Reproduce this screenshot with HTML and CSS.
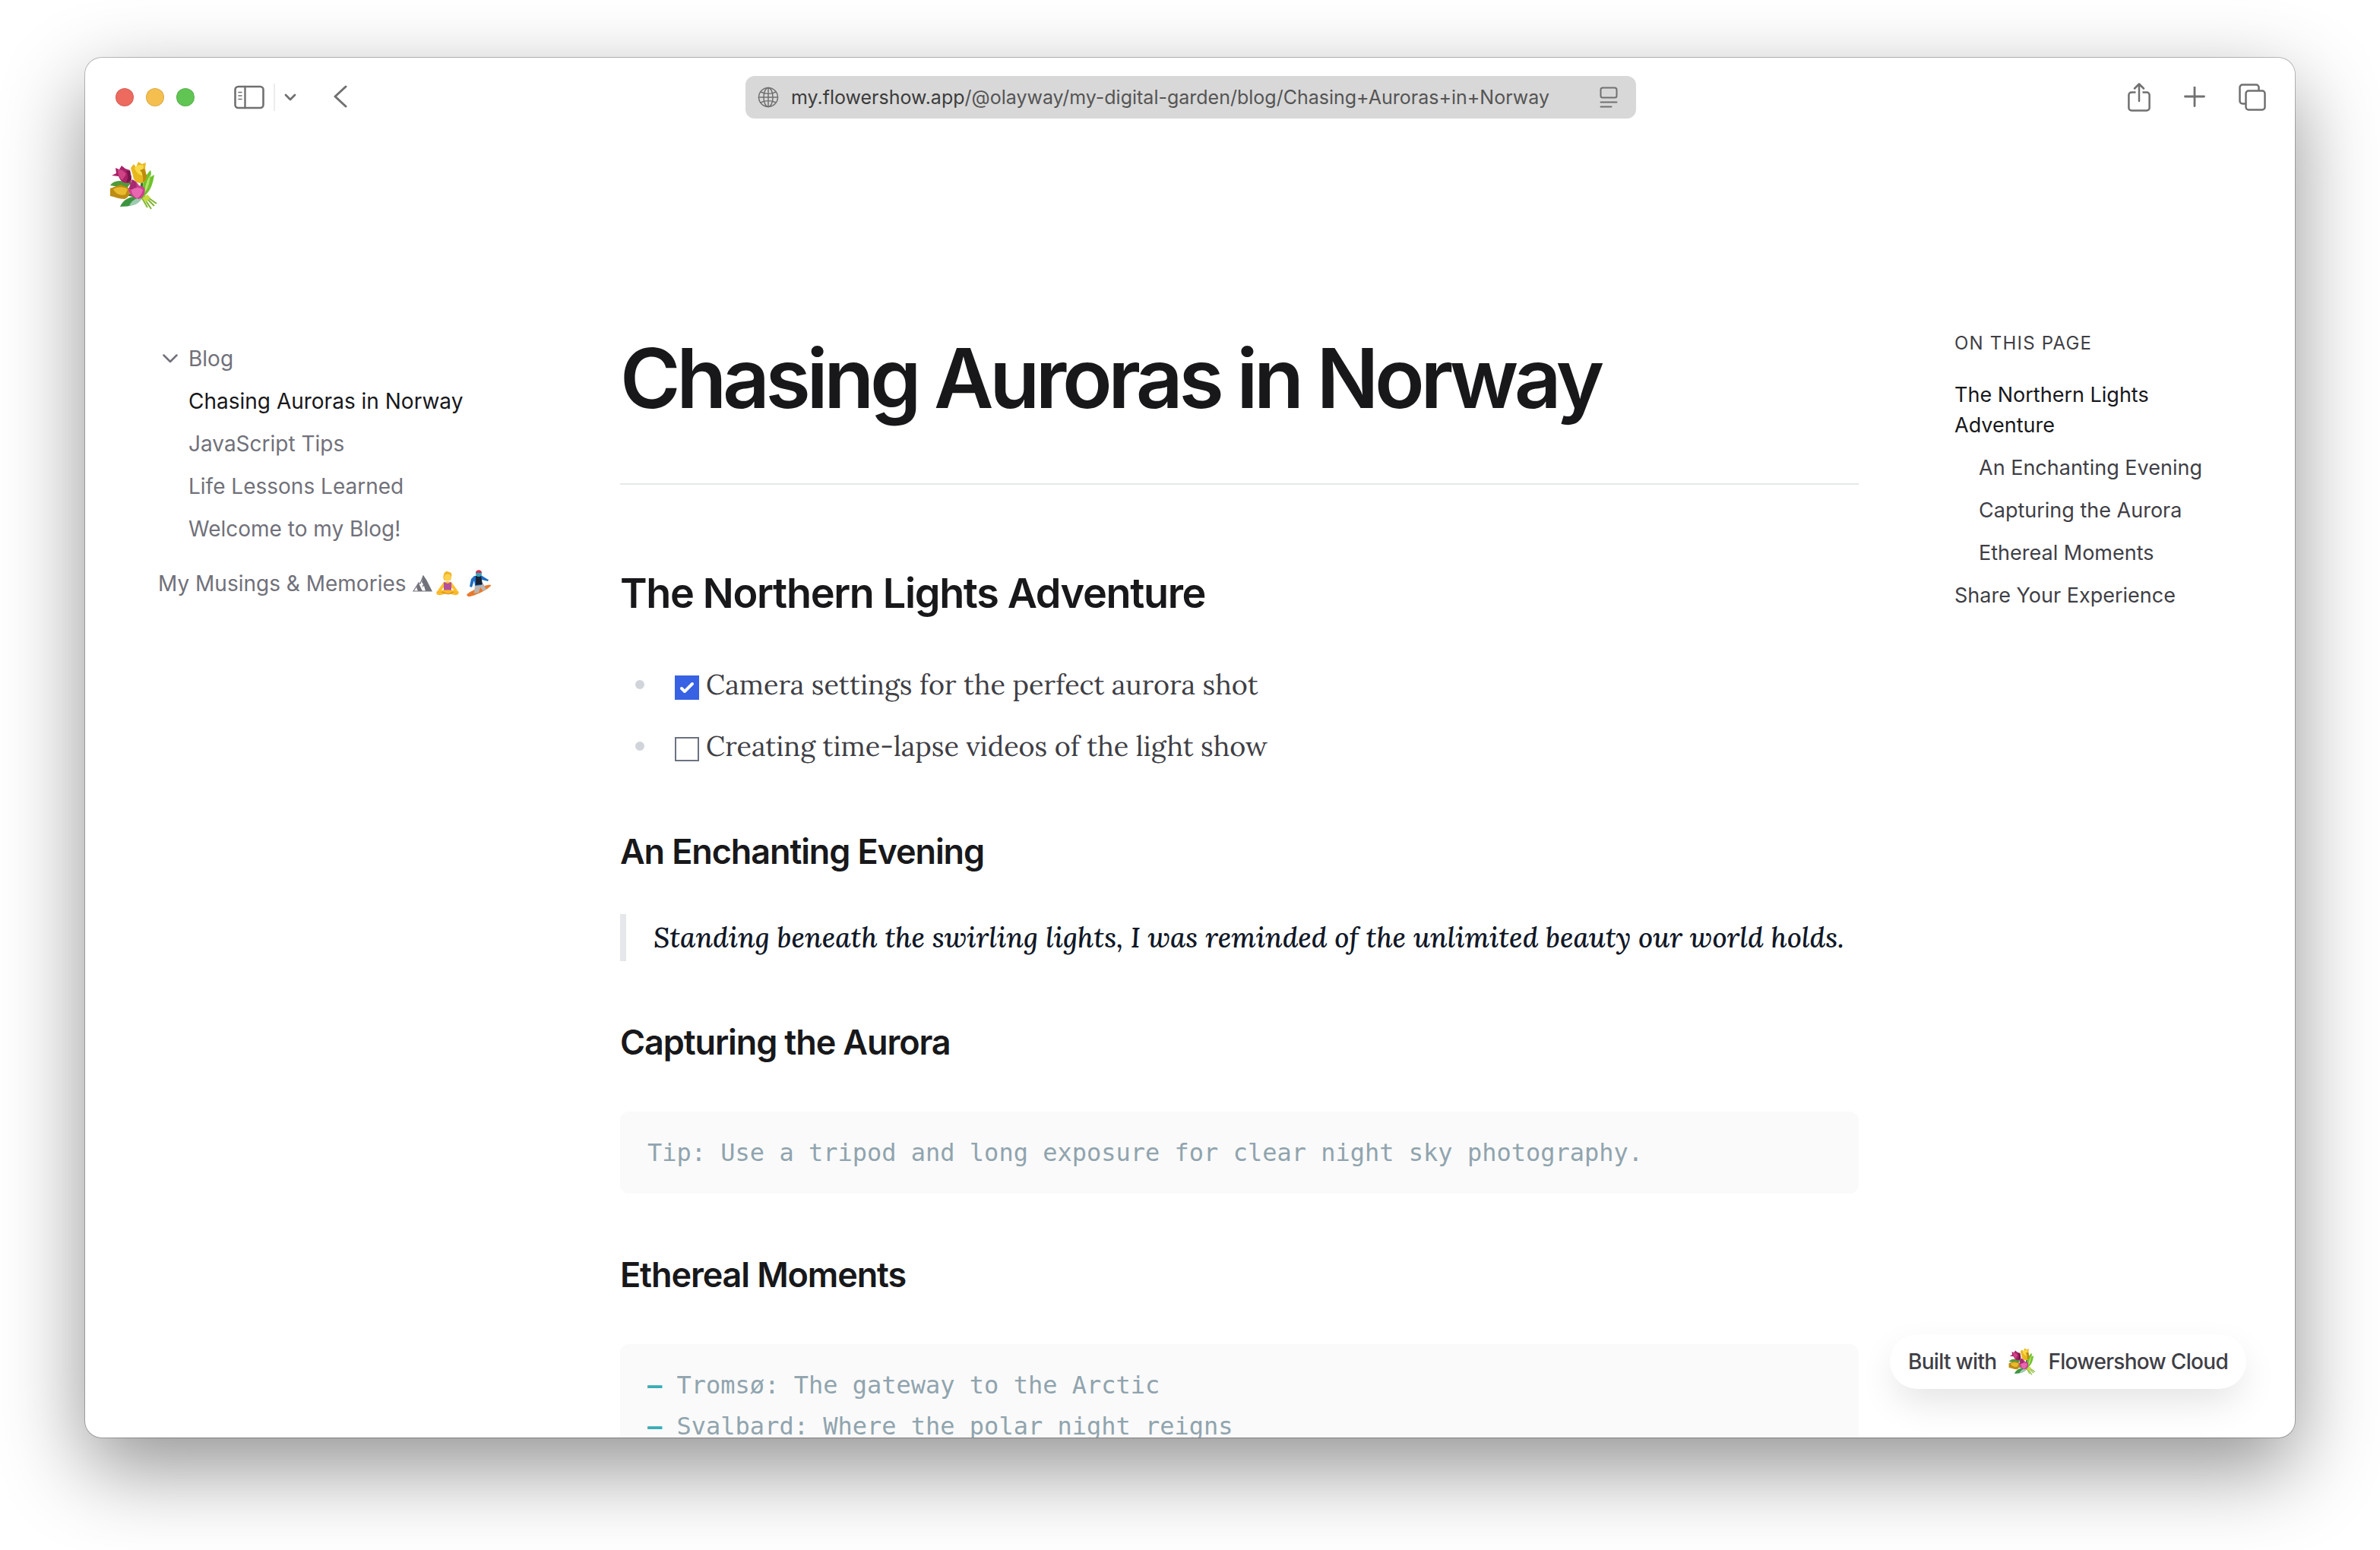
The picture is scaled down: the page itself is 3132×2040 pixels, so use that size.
FILE: index.html
```html
<!DOCTYPE html>
<html lang="en">
<head>
<meta charset="utf-8">
<meta name="viewport" content="width=device-width, initial-scale=1">
<title>Chasing Auroras in Norway</title>
<link rel="stylesheet" href="styles.css">
</head>
<body>
<svg class="defs" aria-hidden="true">
  <symbol id="bouquet" viewBox="0 0 64 64">
    <path d="M14 60c4-9 12-14 26-14l4 2c-6 9-16 12-30 12z" fill="#3d9440"/>
    <path d="M26 59c3-7 9-11 17-11-3 7-8 10-17 11z" fill="#9dcbb0"/>
    <path d="M44 46c-2-14 2-26 10-34 2 4 0 7 0 9l5-3c-2 12-4 20-13 28z" fill="#6fc22c"/>
    <path d="M46 42c1-9 3-17 8-24-1 10-3 18-8 24z" fill="#b4e36a"/>
    <path d="M1 32c5-7 15-8 26-2l-4 6z" fill="#4f9a3a"/>
    <path d="M43 25l-1 14M26 27l6 10M24 44l20 4" stroke="#37762c" stroke-width="3" fill="none"/>
    <path d="M44 46l11 17M46 46l13 13M48 46l14 10M42 47l8 14" stroke="#7fb52c" stroke-width="2" fill="none"/>
    <path d="M43 49l7-5 4 4-6 6z" fill="#c9dc3e"/>
    <path d="M28 9l4-5 3 4 3-7 5 3 5-2-1 7 2 12c-1 5-4 8-8 8-6 0-10-5-10-10z" fill="#e8b71d"/>
    <path d="M33 9c3-4 8-5 12-3l-2 13c-4-1-8-4-10-10z" fill="#f8d94a"/>
    <path d="M40 12c3 2 5 8 4 16 4-2 5-6 5-9l-3-9z" fill="#bd8a0e"/>
    <path d="M3 19l6-3-1-7 5 2 3-5 5 4 6 2 2 11c0 4-2 6-6 6-6 0-9-4-11-9z" fill="#a82267"/>
    <path d="M11 11c5 0 8 2 11 6l-5 8c-4-3-6-8-6-14z" fill="#cf4386"/>
    <path d="M22 13c3 5 3 10 0 15 5 0 7-3 7-7l-2-8z" fill="#78164c"/>
    <path d="M1 36l8-3 6-2 12 5c1 7-2 12-7 14-7 0-13-3-19-4z" fill="#bd8c12"/>
    <path d="M5 37c7-4 14-3 19 0l-3 7c-6 2-12 0-16-7z" fill="#e9ba2e"/>
    <path d="M25 38l4-13 6 2 4 5 7 3c2 7-1 12-7 15-7-1-12-5-14-12z" fill="#cf3e90"/>
    <path d="M26 37l4-13c5 2 7 7 5 13z" fill="#a52a70"/>
    <path d="M29 38c5-4 11-4 15 0-1 5-4 9-8 11-4-3-7-6-7-11z" fill="#e868b0"/>
  </symbol>
</svg>

<div class="window">
  <header class="toolbar">
    <div class="tools">
      <span class="lights"><i class="light red"></i><i class="light amber"></i><i class="light green"></i></span>
      <button class="tool sidebar-tool" aria-label="Show sidebar">
        <svg width="40" height="32" viewBox="0 0 40 32"><rect x="1.5" y="2" width="37" height="28" rx="4" stroke-width="2.6"/><path d="M14.500 2v28" stroke-width="2.400"/><path d="M6 9.500h4M6 14h4M6 18.500h4" stroke-width="1.600"/></svg>
      </button>
      <span class="divider"></span>
      <button class="tool menu-tool" aria-label="Tab groups">
        <svg width="16" height="12" viewBox="0 0 16 12"><path d="M2 3l6 6 6-6" stroke-width="2.800"/></svg>
      </button>
      <button class="tool" aria-label="Back">
        <svg width="20" height="32" viewBox="0 0 20 32"><path d="M17 2L3 15l14 13" stroke-width="3"/></svg>
      </button>
    </div>
    <button class="address" aria-label="Address">
      <svg class="globe" width="28" height="28" viewBox="0 0 28 28"><circle cx="14" cy="14" r="12.500"/><ellipse cx="14" cy="14" rx="6" ry="12.500"/><path d="M14 1.500v25M1.500 14h25M4 7c6 3 14 3 20 0M4 21c6-3 14-3 20 0"/></svg>
      <span class="url"><b>my.flowershow.app</b>/@olayway/my-digital-garden/blog/Chasing+Auroras+in+Norway</span>
      <svg class="reader" width="24" height="28" viewBox="0 0 24 28"><rect x="1.500" y="1.500" width="21" height="13" rx="2.500"/><path d="M1.500 20.500h21M1.500 26.500h14"/></svg>
    </button>
    <div class="tools tools-end">
      <button class="tool" aria-label="Share">
        <svg width="30" height="40" viewBox="0 0 30 40"><path d="M10.500 13.500H5a3.600 3.600 0 0 0-3.600 3.600v16.800A3.600 3.600 0 0 0 5 37.500h20a3.600 3.600 0 0 0 3.600-3.600V17.100A3.600 3.600 0 0 0 25 13.500h-5.500" stroke-linecap="butt"/><path d="M15 25V3M9 8.500l6-6 6 6"/></svg>
      </button>
      <button class="tool" aria-label="New tab">
        <svg width="28" height="28" viewBox="0 0 28 28"><path d="M14 .5v25M1.500 13h25" stroke-width="2.800"/></svg>
      </button>
      <button class="tool" aria-label="Tab overview">
        <svg width="36" height="36" viewBox="0 0 36 36"><path d="M9 26.500H5A3.500 3.500 0 0 1 1.500 23V5A3.500 3.500 0 0 1 5 1.500h18A3.500 3.500 0 0 1 26.500 5v4"/><rect x="9.500" y="9.500" width="25" height="25" rx="3.500"/></svg>
      </button>
    </div>
  </header>

  <div class="site-header">
    <a class="logo" href="#" aria-label="Home"><svg width="64" height="64"><use href="#bouquet"/></svg></a>
  </div>

  <div class="layout">
    <nav class="site-nav" aria-label="Site">
      <button class="folder">
        <svg width="20" height="12" viewBox="0 0 20 12"><path d="M1.500 1.500L10 10l8.500-8.500"/></svg>Blog
      </button>
      <ul class="folder-items">
        <li><a class="current" href="#">Chasing Auroras in Norway</a></li>
        <li><a href="#">JavaScript Tips</a></li>
        <li><a href="#">Life Lessons Learned</a></li>
        <li><a href="#">Welcome to my Blog!</a></li>
      </ul>
      <a class="nav-page" href="#">My Musings &amp; Memories
        <svg class="mountain" width="26" height="22" viewBox="0 0 26 22" role="img" aria-label="mountain"><path d="M1 21L8 10l2 1 4-10 4 6 7 14z" fill="#fff" stroke="#71717a" stroke-width="1.200"/><path d="M14 1l-2 8 2 3-2 4 3-2 2 7h8L18 7zM8 10l-3 6 2 5h6l-3-6z" fill="#71717a"/></svg>
        <svg width="32" height="34" viewBox="0 0 32 34" role="img" aria-label="person in lotus position"><path d="M11 5c1-4 4-5 7-3 3 0 4 3 3 6l-1 5h-8c-2-2-2-5-1-8z" fill="#f0b429"/><circle cx="16" cy="9" r="4.500" fill="#ffd24d"/><path d="M11 15l5-1 5 1 8 11-3 2-6-7h-8l-6 7-3-2z" fill="#fdc02f"/><path d="M11 15l5 2 5-2v11H11z" fill="#b5509c"/><path d="M2 27c6-2 20-2 28 0 2 3-1 6-5 5l-9-2-9 2c-5 1-7-2-5-5z" fill="#f9b92a"/><path d="M8 28l9 3M24 28l-7 3" stroke="#d38b14" stroke-width="1.200"/></svg>
        <svg class="snowboarder" width="34" height="36" viewBox="0 0 34 36" role="img" aria-label="snowboarder"><path d="M1 33c2-4 26-15 32-13 2 3-25 17-30 15z" fill="#e8792d"/><path d="M12 19l11-1 4 8-4 2-4-5-2 7-6 1z" fill="#b9b4b0"/><path d="M11 8l9-1 8 5 2 1-1 2-8-2v7l-9 1-1-7-3 9-3-1 2-10z" fill="#1f6fc4"/><path d="M13 8h7l2 11-9 1z" fill="#152136"/><circle cx="17" cy="5" r="4" fill="#37a3bd"/><path d="M13 4c0-5 8-5 8 0z" fill="#d92f4c"/></svg>
      </a>
    </nav>

    <main class="article">
      <h1>Chasing Auroras in Norway</h1>
      <hr>
      <h2>The Northern Lights Adventure</h2>
      <ul class="tasks">
        <li><label><input type="checkbox" checked>Camera settings for the perfect aurora shot</label></li>
        <li><label><input type="checkbox">Creating time-lapse videos of the light show</label></li>
      </ul>
      <h3>An Enchanting Evening</h3>
      <blockquote>Standing beneath the swirling lights, I was reminded of the unlimited beauty our world holds.</blockquote>
      <h3>Capturing the Aurora</h3>
      <pre><code>Tip: Use a tripod and long exposure for clear night sky photography.</code></pre>
      <h3>Ethereal Moments</h3>
      <pre><code><span class="dash">–</span> Tromsø: The gateway to the Arctic
<span class="dash">–</span> Svalbard: Where the polar night reigns</code></pre>
    </main>

    <aside class="toc">
      <h4>ON THIS PAGE</h4>
      <ul>
        <li><a class="current" href="#">The Northern Lights Adventure</a></li>
        <li class="sub"><a href="#">An Enchanting Evening</a></li>
        <li class="sub"><a href="#">Capturing the Aurora</a></li>
        <li class="sub"><a href="#">Ethereal Moments</a></li>
        <li><a href="#">Share Your Experience</a></li>
      </ul>
    </aside>
  </div>

  <a class="badge" href="#">Built with <svg width="36" height="36" aria-hidden="true"><use href="#bouquet"/></svg> Flowershow Cloud</a>
</div>
</body>
</html>
```
FILE: styles.css
```css
* { box-sizing: border-box; margin: 0; padding: 0; }

body {
  background: #fff;
  color: #3f3f46;
  font-family: Inter, "Liberation Sans", sans-serif;
  font-size: 28px;
  line-height: 40px;
  height: 100vh;
  padding: 76px 112px 148px;
  overflow: hidden;
}

a { color: inherit; text-decoration: none; }
ul { list-style: none; }
button { background: none; border: 0; color: inherit; font: inherit; cursor: pointer; }
svg { display: block; flex: none; }
.defs { position: absolute; width: 0; height: 0; }

.window {
  position: relative;
  height: 100%;
  overflow: hidden;
  background: #fff;
  border-radius: 22px;
  box-shadow: 0 0 0 1px rgba(0, 0, 0, .24), 0 40px 110px rgba(0, 0, 0, .43);
}

/* Browser toolbar */
.toolbar {
  display: grid;
  grid-template-columns: 1fr minmax(0, 1172px) 1fr;
  align-items: center;
  height: 104px;
  padding: 0 38px 0 40px;
}
.tools { display: flex; align-items: center; color: #707070; }
.tools-end { justify-content: flex-end; gap: 44px; }
.tool svg { fill: none; stroke: currentColor; stroke-width: 2.5; stroke-linecap: round; stroke-linejoin: round; }
.lights { display: flex; gap: 16px; }
.light { width: 24px; height: 24px; border-radius: 50%; border: 1px solid rgba(0, 0, 0, .1); }
.red { background: #ec6a5e; }
.amber { background: #f4bf4f; }
.green { background: #61c554; }
.sidebar-tool { margin-left: 52px; }
.divider { width: 2px; height: 36px; margin: 0 12px; background: #ececec; }
.menu-tool { margin-right: 48px; }

.address {
  display: flex;
  align-items: center;
  height: 56px;
  padding: 0 24px 0 16px;
  border-radius: 12px;
  background: #d8d8d8;
  color: #555;
  font-size: 25px;
  text-align: left;
}
.address svg { fill: none; stroke: #707070; stroke-linecap: round; }
.globe { stroke-width: 1.5; }
.reader { stroke-width: 2; }
.url { flex: 1; margin-left: 16px; white-space: nowrap; }
.url b { color: #3c3c3c; font-weight: 400; }

/* Site */
.site-header { display: flex; align-items: center; height: 128px; padding: 0 32px; }
.layout { display: grid; grid-template-columns: 512px minmax(0, 1fr) 382px; gap: 96px; padding: 0 96px; }

.site-nav { padding-top: 144px; color: #71717a; }
.folder { display: flex; align-items: center; gap: 14px; padding-left: 6px; }
.folder svg { fill: none; stroke: currentColor; stroke-width: 2.5; stroke-linecap: round; stroke-linejoin: round; }
.folder-items { display: grid; gap: 16px; padding: 16px 0 32px 40px; }
.current { color: #18181b; }
.nav-page { display: flex; align-items: center; gap: 4px; white-space: nowrap; }
.mountain { margin-left: 4px; }
.snowboarder { margin-left: 4px; }

.article { padding-top: 126px; }
h1, h2, h3 { color: #18181b; font-weight: 600; }
h1 { font-size: 108px; line-height: 128px; letter-spacing: -0.05em; }
hr { margin-top: 74px; border: 0; border-top: 2px solid #e5e7eb; }
h2 { margin-top: 107px; font-size: 54px; line-height: 72px; letter-spacing: -0.025em; }
h3 { margin-top: 77px; font-size: 45px; line-height: 60px; letter-spacing: -0.025em; }

.tasks { display: grid; gap: 17px; margin-top: 52px; padding-left: 20px; }
.tasks li { display: flex; align-items: center; gap: 40px; font-family: Lora, "Liberation Serif", serif; font-size: 36px; line-height: 64px; }
.tasks li::before { content: ""; width: 12px; height: 12px; border-radius: 50%; background: #d1d5db; }
.tasks label { display: flex; align-items: center; gap: 9px; }
.tasks input { appearance: none; width: 32px; height: 32px; margin-top: 8px; border: 2px solid #6b7280; background: #fff; }
.tasks input:checked {
  border-color: #3662e3;
  background: #3662e3 url("data:image/svg+xml,%3Csvg viewBox='0 0 16 16' fill='white' xmlns='http://www.w3.org/2000/svg'%3E%3Cpath d='M12.207 4.793a1 1 0 010 1.414l-5 5a1 1 0 01-1.414 0l-2-2a1 1 0 011.414-1.414L6.500 9.086l4.293-4.293a1 1 0 011.414 0z'/%3E%3C/svg%3E") border-box center / 32px no-repeat;
}
blockquote {
  margin-top: 52px;
  padding-left: 36px;
  border-left: 8px solid #e5e7eb;
  color: #111827;
  font: italic 500 37px/62px Lora, "Liberation Serif", serif;
}

pre { margin-top: 61px; padding: 27px 36px; border-radius: 12px; background: #fafafa; color: #90a4ae; font-size: 32px; line-height: 54px; overflow: hidden; }
code { font-family: Menlo, "DejaVu Sans Mono", monospace; }
.dash { color: #39adb5; font-weight: 700; }

.toc { padding: 128px 0 0 30px; font-size: 27px; }
.toc h4 { margin-bottom: 32px; font-size: 24px; font-weight: 400; line-height: 32px; letter-spacing: 0.05em; }
.toc ul { display: grid; gap: 16px; }
.toc .sub { padding-left: 32px; }

.badge {
  position: absolute;
  right: 64px;
  bottom: 64px;
  display: flex;
  align-items: center;
  gap: 16px;
  height: 72px;
  padding: 0 24px;
  border-radius: 36px;
  background: #fff;
  box-shadow: 0 20px 50px -6px rgba(0, 0, 0, .12);
  font-weight: 500;
  letter-spacing: -0.025em;
}
```
